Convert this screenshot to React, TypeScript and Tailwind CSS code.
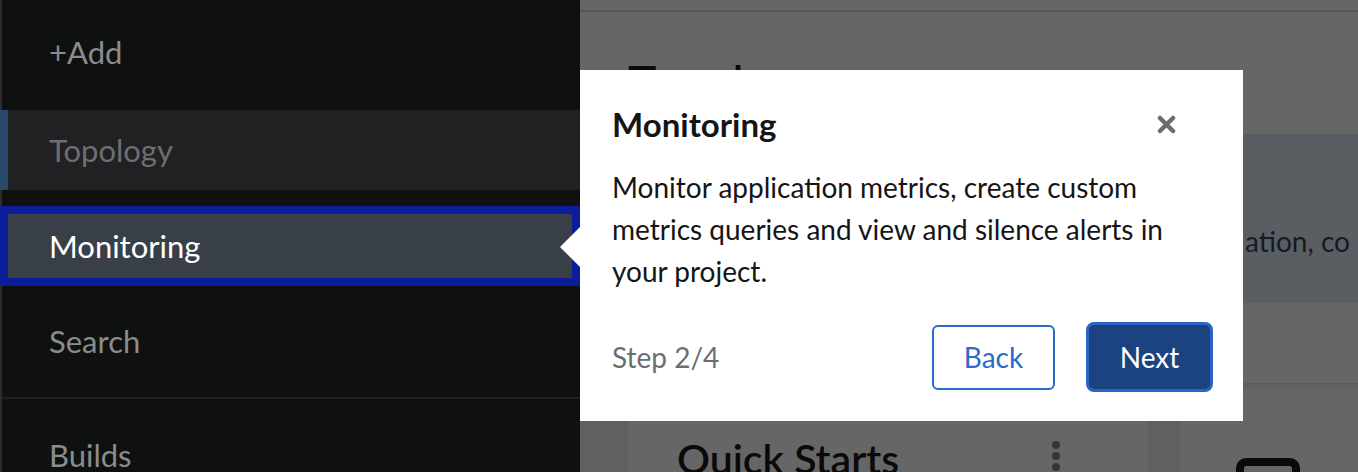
import React from "react";

const NavItem = ({ label, className = "" }: { label: string; className?: string }) => (
	<div className={`flex h-[80px] shrink-0 items-center pl-[47px] text-[31px] ${className}`}>{label}</div>
);

const CloseIcon = () => (
	<svg width="19" height="19" viewBox="0 0 19 19" className="block">
		<path d="M3 3 L16 16 M16 3 L3 16" stroke="#6a6e73" strokeWidth="4.5" strokeLinecap="round" />
	</svg>
);

const TourPopover = () => (
	<div className="absolute left-[580px] top-[70px] flex h-[351px] w-[663px] flex-col bg-white pl-[32px] pr-[30px] pt-[36px]">
		{/* title row */}
		<div className="flex items-center justify-between">
			<h2 className="text-[33px] font-bold leading-[36px] text-[#151515]">Monitoring</h2>
			<button className="mr-[37px]">
				<CloseIcon />
			</button>
		</div>

		<p className="mt-[24px] text-[28px] leading-[42px] text-[#151515]">
			Monitor application metrics, create custom metrics queries and view and silence alerts in your project.
		</p>

		{/* footer */}
		<div className="mt-[30px] flex items-center justify-between">
			<span className="text-[28px] text-[#6a6e73]">Step 2/4</span>
			<div className="flex items-center gap-[31px]">
				<button className="flex h-[65px] w-[123px] items-center justify-center rounded-[6px] border-2 border-[#2b6ac8] bg-white text-[28px] text-[#2b6ac8]">
					Back
				</button>
				<button className="flex h-[70px] w-[127px] items-center justify-center rounded-[8px] border-[3px] border-[#2a64c5] bg-[#1b4380] text-[28px] text-white">
					Next
				</button>
			</div>
		</div>
	</div>
);

export default function App() {
	return (
		<div className="relative flex h-[472px] w-[1358px] overflow-hidden font-['Lato',sans-serif]">
			{/* Sidebar */}
			<aside className="flex w-[580px] shrink-0 flex-col border-l-2 border-[#2c2d2e] bg-[#0f1110] pt-[12px]">
				<NavItem label="+Add" className="text-[#8a8c8e]" />
				<div className="-ml-[2px] mt-[18px] flex h-[80px] shrink-0 bg-[#212123]">
					<div className="w-[8px] bg-[#29496b]" />
					<div className="flex items-center pl-[41px] text-[31px] text-[#6d6f72]">Topology</div>
				</div>
				<div className="-ml-[2px] mt-[16px] h-[80px] shrink-0 border-[8px] border-[#0b1d99] bg-[#393f46]">
					<div className="flex h-full items-center pl-[41px] text-[31px] text-white">Monitoring</div>
				</div>
				<NavItem label="Search" className="mt-[15px] text-[#8a8c8e]" />
				<div className="mt-[16px] h-[2px] shrink-0 bg-[#1e2022]" />
				<NavItem label="Builds" className="mt-[16px] text-[#8a8c8e]" />
			</aside>

			{/* Main content, dimmed by the tour backdrop */}
			<main className="flex flex-1 flex-col bg-[#666666]">
				<div className="h-[10px] shrink-0" />
				<div className="h-[2px] shrink-0 bg-[#575757]" />
				<h1 className="ml-[48px] mt-[47px] shrink-0 text-[48px] font-medium leading-[48px] text-[#0a0a0a]">Topology</h1>
				<div className="mt-[27px] h-[169px] shrink-0 overflow-hidden bg-[#5a5e63] pl-[665px] pt-[86px]">
					<p className="whitespace-nowrap text-[28px] leading-[42px] text-[#151b26]">ation, co</p>
				</div>
				<div className="h-[80px] shrink-0" />
				<div className="h-[1px] shrink-0 bg-[#5c5c5c]" />
				<div className="flex flex-1 shrink-0 gap-[32px] bg-[#606060] pl-[48px]">
					<div className="flex h-[120px] w-[520px] justify-between bg-[#666666] pl-[49px] pr-[88px] pt-[54px] shadow-[inset_0_6px_8px_-6px_rgba(0,0,0,0.15)]">
						<h3 className="text-[41px] font-semibold leading-[41px] text-[#0a0a0a]">Quick Starts</h3>
						<div className="flex flex-col gap-[3px] pt-[3px]">
							<span className="h-[8px] w-[8px] rounded-full bg-[#333537]" />
							<span className="h-[8px] w-[8px] rounded-full bg-[#333537]" />
							<span className="h-[8px] w-[8px] rounded-full bg-[#333537]" />
						</div>
					</div>
					<div className="h-[120px] flex-1 bg-[#666666] pl-[56px] pt-[74px] shadow-[inset_0_6px_8px_-6px_rgba(0,0,0,0.15)]">
						<div className="h-[40px] w-[64px] rounded-t-[10px] border-x-[8px] border-t-[8px] border-[#0a0a0a]" />
					</div>
				</div>
			</main>

			{/* Tour popover arrow */}
			<div className="absolute left-[560px] top-[227px] h-0 w-0 border-y-[20px] border-r-[20px] border-y-transparent border-r-white" />
			<TourPopover />
		</div>
	);
}
